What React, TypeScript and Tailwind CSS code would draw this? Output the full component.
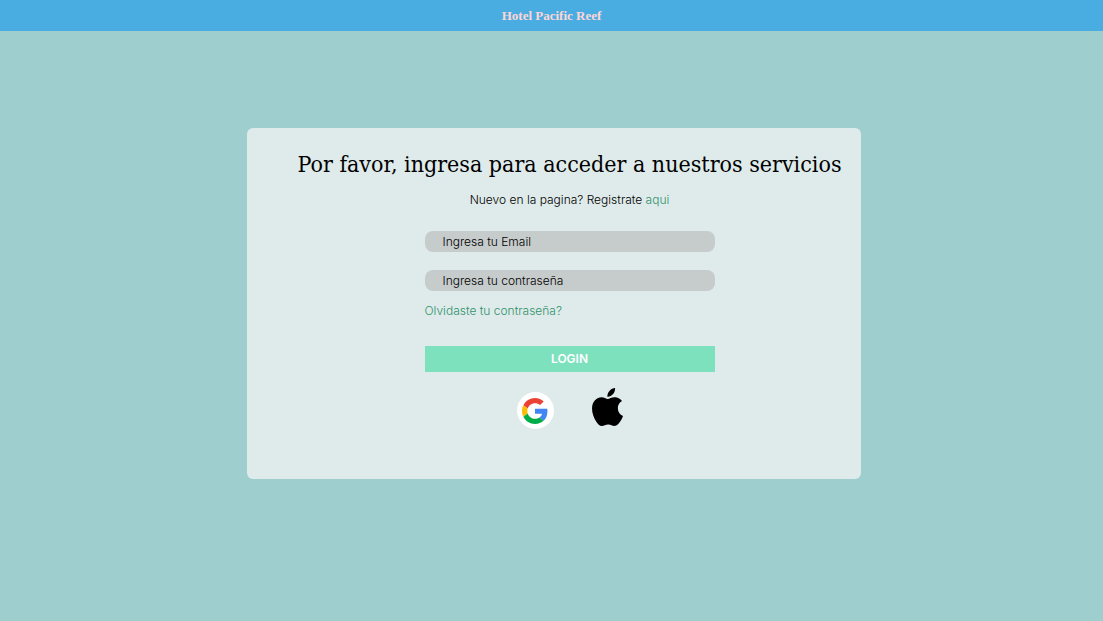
function GoogleLogo() {
  return (
    <svg viewBox="0 0 48 48" className="size-[26px]" aria-hidden="true">
      <path fill="#EA4335" d="M24 9.5c3.54 0 6.71 1.22 9.21 3.6l6.85-6.85C35.9 2.38 30.47 0 24 0 14.62 0 6.51 5.38 2.56 13.22l7.98 6.19C12.43 13.72 17.74 9.5 24 9.5z" />
      <path fill="#4285F4" d="M46.98 24.55c0-1.57-.15-3.09-.38-4.55H24v9.02h12.94c-.58 2.96-2.26 5.48-4.78 7.18l7.73 6c4.51-4.18 7.09-10.36 7.09-17.65z" />
      <path fill="#FBBC05" d="M10.53 28.59c-.48-1.45-.76-2.99-.76-4.59s.27-3.14.76-4.59l-7.98-6.19C.92 16.46 0 20.12 0 24c0 3.88.92 7.54 2.56 10.78l7.97-6.19z" />
      <path fill="#00AC47" d="M24 48c6.48 0 11.93-2.13 15.89-5.81l-7.73-6c-2.15 1.45-4.92 2.3-8.16 2.3-6.26 0-11.57-4.22-13.47-9.91l-7.98 6.19C6.51 42.62 14.62 48 24 48z" />
    </svg>
  );
}

function AppleLogo() {
  return (
    <svg viewBox="0 0 814 1000" className="h-[38px] w-[31px]" aria-hidden="true">
      <path d="M788.1 340.9c-5.8 4.5-108.2 62.2-108.2 190.5 0 148.4 130.3 200.9 134.2 202.2-.6 3.2-20.7 71.9-68.7 141.9-42.8 61.6-87.5 123.1-155.5 123.1s-85.5-39.5-164-39.5c-76.500 0-103.700 40.800-165.900 40.800s-105.600-57-155.500-127C46.700 790.700 0 663 0 541.800c0-194.400 126.400-297.500 250.800-297.500 66.100 0 121.200 43.400 162.700 43.400 39.500 0 101.100-46 176.300-46 28.500 0 130.900 2.600 198.300 99.200zm-234-181.500c31.100-36.900 53.100-88.100 53.100-139.300 0-7.100-.6-14.300-1.900-20.100-50.600 1.900-110.800 33.700-147.100 75.800-28.500 32.400-55.100 83.600-55.100 135.500 0 7.800 1.300 15.600 1.900 18.100 3.200.6 8.400 1.300 13.600 1.300 45.400 0 102.500-30.400 135.500-71.300z" />
    </svg>
  );
}

const fieldClass =
  "block h-[21px] w-full rounded-lg bg-[#c6cbcb] px-[18px] text-xs font-light text-black outline-none placeholder:text-black focus:ring-1 focus:ring-[#439d78]";

export default function App() {
  return (
    <div className="min-h-screen bg-[#9ecece] font-['Inter',sans-serif] text-xs text-black">
      <header className="flex h-[31px] items-center justify-center bg-[#49ade2]">
        <span className="font-['Liberation_Serif',serif] text-[13px] font-bold text-[#ffd6d6]">Hotel Pacific Reef</span>
      </header>
      <main className="flex justify-center pt-[97px] pb-8 pl-1">
        <section className="w-full max-w-[614px] rounded-md bg-[#dfebea] pt-5 pb-[50px] pl-8">
          <h1 className="text-center font-['DejaVu_Serif_Condensed','DejaVu_Serif',serif] text-[23px] leading-8 sm:whitespace-nowrap">
            Por favor, ingresa para acceder a nuestros servicios
          </h1>
          <p className="mt-3 text-center leading-4 font-light">
            Nuevo en la pagina? Registrate <a href="#registro" className="text-[#2f916a]">aqui</a>
          </p>
          <form className="mx-auto mt-[23px] w-full max-w-[290px]" onSubmit={(e) => e.preventDefault()}>
            <input type="email" aria-label="Ingresa tu Email" placeholder="Ingresa tu Email" className={fieldClass} />
            <input type="password" aria-label="Ingresa tu contraseña" placeholder="Ingresa tu contraseña" className={`mt-[18px] ${fieldClass}`} />
            <a href="#recuperar" className="mt-3 block w-fit leading-4 font-light text-[#2f916a]">Olvidaste tu contraseña?</a>
            <button type="submit" className="mt-[27px] block h-[26px] w-full bg-[#7de1be] text-center font-semibold text-white">LOGIN</button>
          </form>
          <div className="mt-4 flex items-start justify-center gap-[38px]">
            <button type="button" aria-label="Google" className="mt-1 flex size-[37px] items-center justify-center rounded-full bg-white">
              <GoogleLogo />
            </button>
            <button type="button" aria-label="Apple">
              <AppleLogo />
            </button>
          </div>
        </section>
      </main>
    </div>
  );
}
